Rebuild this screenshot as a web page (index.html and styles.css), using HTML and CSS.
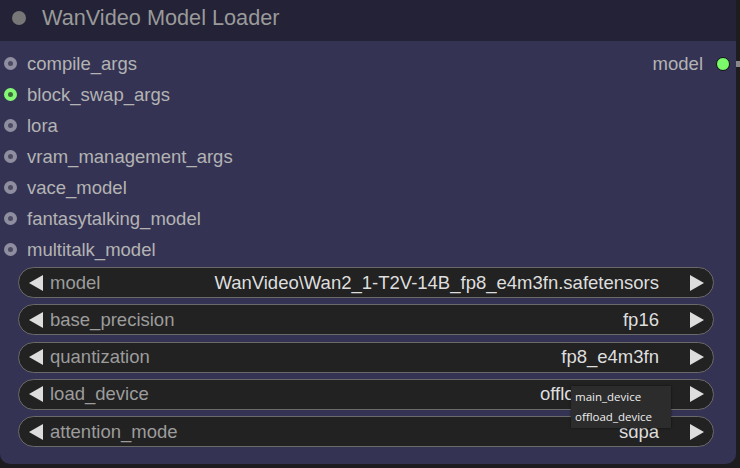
FILE: index.html
```html
<!DOCTYPE html>
<html lang="en">
<head>
    <meta charset="UTF-8">
    <title>WanVideo Model Loader</title>
    <link rel="stylesheet" href="styles.css">
</head>
<body>
    <div class="node">
        <div class="node-title">
            <span class="title-dot"></span>
            <span class="title-text">WanVideo Model Loader</span>
        </div>

        <div class="slots">
            <div class="inputs">
                <div class="slot"><span class="dot"></span>compile_args</div>
                <div class="slot"><span class="dot linked"></span>block_swap_args</div>
                <div class="slot"><span class="dot"></span>lora</div>
                <div class="slot"><span class="dot"></span>vram_management_args</div>
                <div class="slot"><span class="dot"></span>vace_model</div>
                <div class="slot"><span class="dot"></span>fantasytalking_model</div>
                <div class="slot"><span class="dot"></span>multitalk_model</div>
            </div>
            <div class="outputs">
                <div class="slot out">model<span class="out-dot"></span></div>
            </div>
        </div>

        <div class="widgets">
            <div class="widget">
                <span class="arrow left"></span>
                <span class="w-label">model</span>
                <span class="w-value">WanVideo\Wan2_1-T2V-14B_fp8_e4m3fn.safetensors</span>
                <span class="arrow right"></span>
            </div>
            <div class="widget">
                <span class="arrow left"></span>
                <span class="w-label">base_precision</span>
                <span class="w-value">fp16</span>
                <span class="arrow right"></span>
            </div>
            <div class="widget">
                <span class="arrow left"></span>
                <span class="w-label">quantization</span>
                <span class="w-value">fp8_e4m3fn</span>
                <span class="arrow right"></span>
            </div>
            <div class="widget">
                <span class="arrow left"></span>
                <span class="w-label">load_device</span>
                <span class="w-value">offload_device</span>
                <span class="arrow right"></span>
            </div>
            <div class="widget">
                <span class="arrow left"></span>
                <span class="w-label">attention_mode</span>
                <span class="w-value">sdpa</span>
                <span class="arrow right"></span>
            </div>
        </div>

        <!-- menu du combo ouvert -->
        <div class="combo-menu">
            <div class="menu-entry">main_device</div>
            <div class="menu-entry">offload_device</div>
        </div>
    </div>
    <div class="link"></div>
</body>
</html>
```

FILE: styles.css
```css
body {
    margin: 0;
    padding: 0;
    background-color: #1d1d1f;
    font-family: "Liberation Sans", Arial, sans-serif;
    width: 740px;
    height: 468px;
    overflow: hidden;
    position: relative;
}

/* Noeud */
.node {
    position: relative;
    width: 736px;
    height: 464px;
    background-color: #353353;
    border-radius: 0 0 10px 10px;
    overflow: hidden;
}

.node-title {
    height: 41px;
    background-color: #232236;
    display: flex;
    align-items: center;
    color: #9a9a9a;
    font-size: 21.7px;
}

.title-dot {
    width: 14px;
    height: 14px;
    border-radius: 50%;
    background-color: #777;
    margin-left: 12px;
    margin-right: 16px;
    margin-top: -5px;
}

.title-text {
    margin-top: -5px;
}

/* Entrees et sorties */
.slots {
    display: flex;
    justify-content: space-between;
    padding-top: 7px;
}

.slot {
    height: 31px;
    line-height: 31px;
    display: flex;
    align-items: center;
    color: #b3b3b3;
    font-size: 18.5px;
}

.dot {
    width: 5px;
    height: 5px;
    border-radius: 50%;
    border: 4px solid #8f8ea0;
    background-color: #4c4b64;
    margin-left: 4px;
    margin-right: 10px;
    box-sizing: content-box;
}

.dot.linked {
    border-color: #84f874;
    background-color: #3d6a3c;
}

.out {
    padding-right: 6px;
}

.out-dot {
    width: 12px;
    height: 12px;
    border-radius: 50%;
    background-color: #7cf86b;
    border: 1px solid #111;
    margin-left: 13px;
}

/* Widgets */
.widgets {
    display: flex;
    flex-direction: column;
    gap: 6.25px;
    padding-top: 2px;
    padding-left: 18px;
}

.widget {
    width: 696px;
    height: 31px;
    box-sizing: border-box;
    border: 1px solid #6a6a6a;
    border-radius: 16px;
    background-color: #222;
    display: flex;
    align-items: center;
    font-size: 18.5px;
}

.arrow {
    width: 0;
    height: 0;
    border-top: 8px solid transparent;
    border-bottom: 8px solid transparent;
}

.arrow.left {
    border-right: 14px solid #ddd;
    margin-left: 10px;
}

.arrow.right {
    border-left: 14px solid #ddd;
    margin-left: 31px;
    margin-right: 9px;
}

.w-label {
    color: #9c9c9c;
    margin-left: 7px;
    flex: 1;
}

.w-value {
    color: #dedede;
}

/* Menu du combo */
.combo-menu {
    position: absolute;
    left: 571px;
    top: 386px;
    width: 100px;
    height: 42px;
    background-color: #2c2c2c;
    box-shadow: 0 0 2px rgba(0, 0, 0, 0.6);
    box-sizing: border-box;
    padding: 1px 0 0 4px;
    font-family: "Open Sans", sans-serif;
    font-size: 11.5px;
    color: #eee;
}

.menu-entry {
    height: 20px;
    line-height: 20px;
}

.link {
    position: absolute;
    left: 736px;
    top: 61px;
    width: 4px;
    height: 6px;
    background-color: #888;
}
```
